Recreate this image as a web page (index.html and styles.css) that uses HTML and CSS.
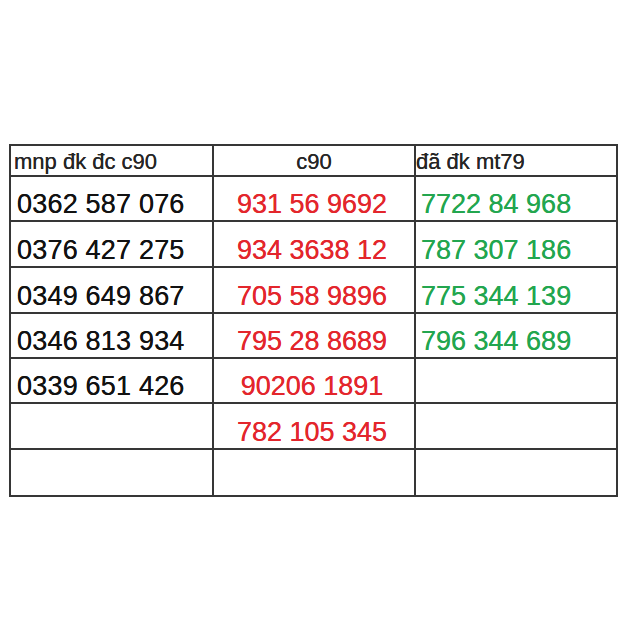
FILE: index.html
```html
<!DOCTYPE html>
<html>
<head>
<meta charset="utf-8">
<link rel="stylesheet" href="styles.css">
</head>
<body>
<div class="sheet">
  <div class="grid">
    <div class="cell head h1 left">mnp đk đc c90</div>
    <div class="cell head h1 center">c90</div>
    <div class="cell head h1 left tight">đã đk mt79</div>

    <div class="cell r45 num black">0362 587 076</div>
    <div class="cell r45 num red center">931 56 9692</div>
    <div class="cell r45 num green">7722 84 968</div>

    <div class="cell r46 num black">0376 427 275</div>
    <div class="cell r46 num red center">934 3638 12</div>
    <div class="cell r46 num green">787 307 186</div>

    <div class="cell r46 num black">0349 649 867</div>
    <div class="cell r46 num red center">705 58 9896</div>
    <div class="cell r46 num green">775 344 139</div>

    <div class="cell r45 num black">0346 813 934</div>
    <div class="cell r45 num red center">795 28 8689</div>
    <div class="cell r45 num green">796 344 689</div>

    <div class="cell r45 num black">0339 651 426</div>
    <div class="cell r45 num red center">90206 1891</div>
    <div class="cell r45 num green"></div>

    <div class="cell r46 num black"></div>
    <div class="cell r46 num red center">782 105 345</div>
    <div class="cell r46 num green"></div>

    <div class="cell r47 num black"></div>
    <div class="cell r47 num red center"></div>
    <div class="cell r47 num green"></div>
  </div>
</div>
</body>
</html>
```
FILE: styles.css
```css
html, body {
  margin: 0;
  padding: 0;
  background: #ffffff;
}
body {
  width: 640px;
  height: 640px;
  font-family: "Liberation Sans", Arial, sans-serif;
}
.sheet {
  padding-top: 144px;
  padding-left: 9px;
}
.grid {
  display: grid;
  grid-template-columns: 203px 202px 202px;
  width: 607px;
  border-top: 2px solid #363636;
  border-left: 2px solid #363636;
}
.cell {
  box-sizing: border-box;
  border-right: 2px solid #363636;
  border-bottom: 2px solid #363636;
  display: flex;
  align-items: flex-end;
  white-space: nowrap;
}
.head {
  font-size: 22px;
  line-height: 20px;
  color: #262626;
  padding-bottom: 3px;
  text-shadow: 0 0 0.4px currentColor;
}
.h1 { height: 31px; }
.r45 { height: 45px; }
.r46 { height: 46px; }
.r47 { height: 47px; }
.left { padding-left: 3px; }
.left.tight { padding-left: 0; }
.center { justify-content: center; padding-left: 0; }
.num {
  font-size: 27px;
  line-height: 27px;
  padding-bottom: 2px;
  text-shadow: 0 0 0.5px currentColor;
}
.black { color: #121212; padding-left: 6px; letter-spacing: 0.2px; }
.red { color: #e3262c; padding-right: 4px; }
.green { color: #23a64f; padding-left: 5px; }
```
